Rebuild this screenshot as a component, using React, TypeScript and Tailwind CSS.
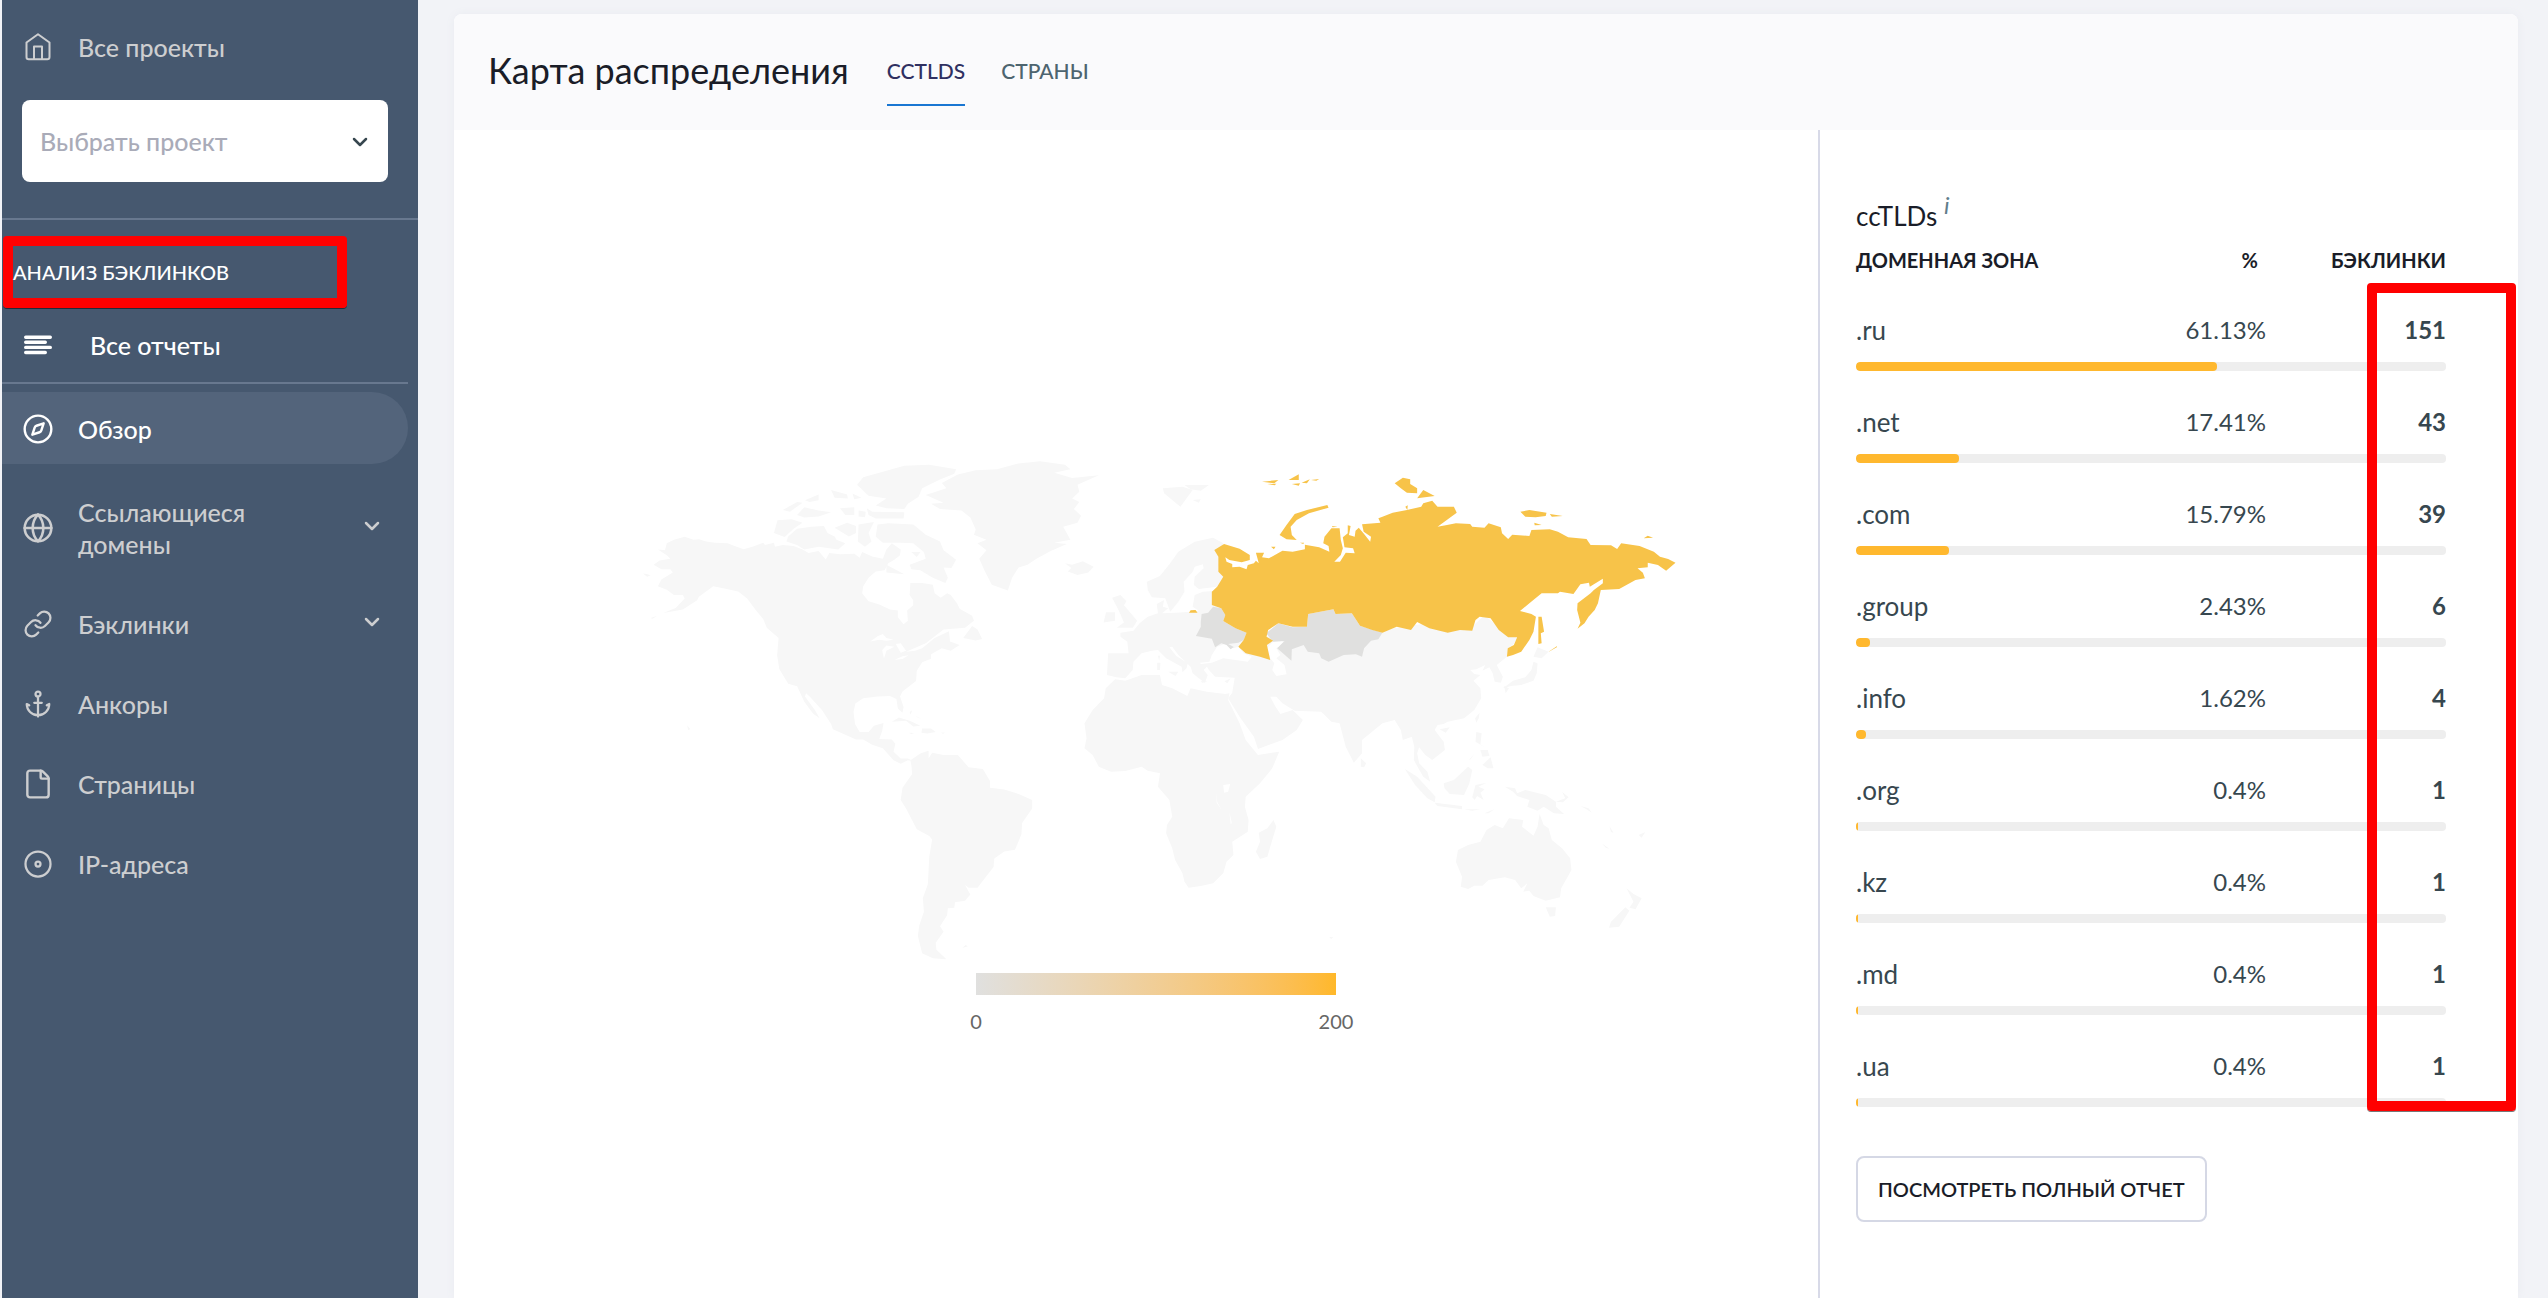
import type { ReactNode } from "react";
import { Anchor, ChevronDown, Compass, Disc, File, Globe, Link as LinkIcon } from "lucide-react";

const ZONES = [
  { zone: ".ru", percent: 61.13, backlinks: 151 },
  { zone: ".net", percent: 17.41, backlinks: 43 },
  { zone: ".com", percent: 15.79, backlinks: 39 },
  { zone: ".group", percent: 2.43, backlinks: 6 },
  { zone: ".info", percent: 1.62, backlinks: 4 },
  { zone: ".org", percent: 0.4, backlinks: 1 },
  { zone: ".kz", percent: 0.4, backlinks: 1 },
  { zone: ".md", percent: 0.4, backlinks: 1 },
  { zone: ".ua", percent: 0.4, backlinks: 1 },
];

function HomeIcon() {
  return (
    <svg viewBox="0 0 26 28" className="h-7 w-[26px]" fill="none" stroke="currentColor" strokeWidth="2" strokeLinejoin="round">
      <path d="M1.5 9.5 13 1.3 24.5 9.5V24a2.2 2.2 0 0 1-2.2 2.2H3.7A2.2 2.2 0 0 1 1.5 24Z" />
      <path d="M9 26V13.5h8V26" />
    </svg>
  );
}

function ReportsIcon() {
  return (
    <svg viewBox="0 0 28 20" className="h-5 w-7" stroke="currentColor" strokeWidth="3.4" strokeLinecap="round">
      <path d="M1.7 2.2h24.6M1.7 7.3h19.6M1.7 12.4h24.6M1.7 17.5h19.6" />
    </svg>
  );
}

function NavItem({ icon, label, expandable }: { icon: ReactNode; label: string; expandable?: boolean }) {
  return (
    <a href="#" className="flex min-h-20 items-center py-6 pr-[34px] text-[#cdced0]">
      <span className="flex w-[72px] shrink-0 justify-center">{icon}</span>
      <span className="ml-1 w-[200px] leading-8">{label}</span>
      {expandable && <ChevronDown className="-mt-1 ml-auto h-6 w-6" strokeWidth={2.5} />}
    </a>
  );
}

function Sidebar() {
  return (
    <aside className="ml-0.5 w-[416px] shrink-0 bg-[#46586f] text-[25px] leading-8 font-medium">
      <a href="#" className="flex h-[100px] items-center pb-1.5 text-[#cdced0]">
        <span className="flex w-[72px] justify-center"><HomeIcon /></span>
        <span className="ml-1">Все проекты</span>
      </a>
      <div className="relative mr-[30px] ml-5">
        <select aria-label="Выбрать проект" className="h-[82px] w-full appearance-none rounded-lg bg-white px-[18px] font-medium text-[#a9abb8]">
          <option>Выбрать проект</option>
        </select>
        <ChevronDown className="pointer-events-none absolute top-[30px] right-4 h-6 w-6 text-[#37474f]" strokeWidth={2.5} />
      </div>
      <hr className="mt-9 border-t-2 border-[#68788f]" />
      <h2 className="mt-4 ml-px flex h-[72px] w-[344px] items-center rounded border-[10px] border-[#ff0000] text-xl font-medium text-white shadow-[0_1px_0_#222c3a]">
        АНАЛИЗ БЭКЛИНКОВ
      </h2>
      <a href="#" className="mr-2.5 flex h-[76px] items-center border-b-2 border-[#68788f] text-white">
        <span className="flex w-[72px] justify-center"><ReportsIcon /></span>
        <span className="ml-4">Все отчеты</span>
      </a>
      <nav>
        <a href="#" className="mt-2 mr-2.5 mb-2 flex h-[72px] items-center rounded-r-full bg-[#53647b] pt-0.5 text-white">
          <span className="flex w-[72px] justify-center"><Compass className="h-8 w-8" strokeWidth={1.8} /></span>
          <span className="ml-1">Обзор</span>
        </a>
        <NavItem icon={<Globe className="h-8 w-8" strokeWidth={1.9} />} label="Ссылающиеся домены" expandable />
        <NavItem icon={<LinkIcon className="h-[30px] w-[30px]" strokeWidth={1.8} />} label="Бэклинки" expandable />
        <NavItem icon={<Anchor className="h-[30px] w-[30px]" strokeWidth={1.8} />} label="Анкоры" />
        <NavItem icon={<File className="h-8 w-8" strokeWidth={1.8} />} label="Страницы" />
        <NavItem icon={<Disc className="h-[30px] w-[30px]" strokeWidth={1.8} />} label="IP-адреса" />
      </nav>
    </aside>
  );
}

function WorldMap() {
  return (
    <svg viewBox="632 456 1048 508" className="w-[1048px] max-w-full" role="img">
      {/* Western hemisphere, Greenland, British Isles */}
      <g transform="translate(640 440) scale(.35714 .34439)" fill="#f7f7f7">
        <path d="M50 318 70 320 75 300 95 290 125 281 150 290 165 288 185 295 210 298 245 300 265 308 290 317 315 310 345 298 350 305 375 298 378 310 400 305 430 308 455 318 472 328 500 322 520 347 530 328 560 332 600 330 615 342 622 325 650 338 680 345 690 318 705 300 730 318 728 335 712 348 695 358 685 378 660 382 640 400 625 425 622 445 640 468 670 478 700 492 722 495 722 515 738 535 750 525 748 495 765 480 765 465 755 450 757 415 790 415 820 420 825 445 842 458 860 445 870 450 888 475 895 490 930 510 935 525 910 545 850 550 800 590 745 615 770 612 790 605 825 575 865 555 868 585 895 595 870 612 845 605 815 622 815 635 790 645 775 670 773 700 735 730 728 745 738 775 735 792 722 780 718 752 700 743 665 745 625 750 603 765 598 790 602 825 615 848 640 848 655 830 682 822 678 845 670 868 705 870 715 882 710 905 730 925 750 925 765 932 750 930 730 940 710 930 680 895 650 885 625 870 605 870 540 840 535 825 510 785 475 745 465 735 462 745 490 785 503 808 485 795 460 760 440 715 415 708 390 665 384 625 388 575 355 545 345 520 325 495 300 460 275 440 240 432 205 425 165 455 160 465 120 492 65 502 100 488 125 460 120 450 95 450 75 435 50 425 60 405 92 385 85 375 60 375 38 362 55 350 85 345 75 335Z" />
        <path d="M757 930 785 910 808 902 808 925 818 908 850 915 890 915 920 950 960 955 980 990 980 1010 1020 1015 1060 1028 1098 1045 1098 1070 1070 1112 1068 1145 1050 1190 1020 1195 992 1215 990 1240 960 1280 945 1300 920 1300 910 1292 925 1320 910 1338 882 1342 880 1358 862 1360 860 1380 840 1412 850 1428 828 1460 830 1480 858 1508 820 1505 790 1490 778 1440 782 1410 795 1370 792 1330 806 1290 810 1210 818 1160 810 1150 775 1130 745 1070 730 1045 735 1010 762 970 760 945Z" />
        <path d="M800 160 858 140 845 125 890 100 940 88 1000 85 1060 68 1120 62 1190 72 1205 85 1160 95 1210 110 1285 102 1225 130 1230 150 1210 170 1230 180 1215 200 1235 220 1225 240 1185 252 1205 290 1160 298 1195 302 1150 322 1110 345 1085 362 1060 370 1042 400 1030 437 985 420 965 380 950 345 970 320 945 300 970 290 935 275 940 260 925 225 900 205 840 200 815 185 850 182Z" />
        <path d="M660 280 665 245 695 242 765 245 800 275 840 295 850 320 885 348 872 372 850 370 862 400 855 415 820 400 785 378 760 375 755 362 800 345 795 325 765 300 730 298 680 298Z" />
        <path d="M608 130 625 108 670 95 740 75 810 72 885 85 880 98 840 115 790 140 780 165 750 185 740 200 690 198 660 190 690 170 640 162ZM635 198 650 208 740 210 738 228 660 228 640 218ZM415 280 440 258 480 252 515 250 525 270 545 280 550 290 575 300 555 318 500 310 460 318 440 305 410 295ZM385 233 425 230 455 240 430 258 405 282 375 270Z" />
        <path d="M545 255 580 240 605 250 605 270 585 280ZM612 245 655 238 640 270 648 295 630 310 610 295ZM400 203 440 180 455 182 420 208ZM440 218 460 195 500 205 535 210 500 222 460 225ZM462 175 500 158 500 175 475 180ZM535 145 580 158 582 170 545 168ZM560 198 600 195 600 218 575 218ZM595 155 620 168 600 172ZM612 205 632 208 630 224 612 222ZM690 362 740 390 690 385ZM760 325 785 325 775 340Z" />
        <path d="M905 575 930 540 945 550 958 578 940 582ZM705 818 725 806 755 815 785 830 765 832 745 815ZM790 838 815 838 828 848 805 852 788 850ZM843 849 855 850 848 853ZM752 850 768 851 760 854ZM902 1475 912 1466 918 1470ZM132 828 141 840 135 842ZM8 388 18 389 30 393 20 397ZM30 517 48 510 35 519ZM755 790 762 785 758 798ZM770 800 790 811 778 806Z" />
        <path d="M1190 358 1210 362 1240 352 1270 368 1255 385 1225 392 1198 382 1208 372ZM1298 530 1305 500 1330 500 1330 525ZM1322 458 1345 450 1362 468 1355 480 1370 498 1392 525 1380 545 1335 545 1355 530 1345 505 1338 490Z" />
        <path fill="#fff" d="M645 585 665 570 680 563 690 575 710 580 690 583 670 580ZM683 635 678 610 690 597 712 600 690 612ZM716 592 730 590 745 612 730 618ZM713 638 735 628 752 625 735 636Z" />
      </g>
      <g transform="translate(1060 440) scale(.40816 .33333)" fill="#f7f7f7">
        {/* Europe and Asia */}
        <path d="M213 425 245 408 270 370 290 335 330 305 375 293 400 310 390 350 402 410 385 440 340 447 328 435 330 410 352 385 350 373 330 380 325 395 303 425 305 455 290 485 270 515 258 475 225 472 215 450Z" />
        <path d="M148 578 180 572 195 550 215 530 240 520 237 492 255 480 252 500 265 505 250 520 285 518 320 515 340 512 325 500 330 465 350 455 385 452 420 500 500 590 790 570 900 550 1010 560 1040 525 1095 585 1120 592 1112 612 1098 625 1095 650 1070 675 1085 710 1080 728 1065 725 1060 700 1052 682 1035 692 1042 675 1020 688 1005 690 1015 702 1030 705 1013 722 1030 745 1032 775 1015 810 990 835 950 845 940 852 925 855 918 870 940 905 943 930 912 960 895 945 880 922 875 940 880 970 900 995 907 1025 890 1010 878 985 867 960 868 920 862 890 840 900 835 870 820 840 790 850 740 900 740 940 720 968 700 920 685 850 665 845 640 815 575 812 545 790 530 770 515 770 528 800 540 822 570 810 595 840 580 870 545 900 485 927 475 890 440 830 412 775 422 758 428 713 380 710 365 690 360 680 352 690 362 705 355 728 340 715 325 700 320 680 290 645 275 620 268 622 285 648 313 670 310 685 300 697 298 680 260 655 240 630 225 632 200 640 180 665 178 690 160 715 138 712 115 705 118 640 168 640 165 605 148 590Z" />
        <path fill="#fff" d="M372 645 385 620 408 610 425 625 437 620 450 640 470 650 460 665 430 660 400 655 372 668 345 672 343 668 366 665ZM507 625 522 605 545 603 550 612 530 625 540 645 530 655 550 675 555 703 530 708 520 690 525 670 515 655Z" />
        <path d="M252 145 300 140 325 150 295 200 280 185 255 160ZM305 135 365 135 345 152 320 148ZM325 180 345 178 340 188ZM265 695 290 695 283 708ZM238 668 246 668 245 690 238 690ZM240 647 245 647 243 662ZM345 723 362 725 348 728ZM403 724 418 715 410 730ZM737 955 750 970 745 982 737 980ZM1028 818 1026 835 1020 848 1017 835ZM930 868 955 862 945 878Z" />
        <path d="M1170 622 1197 635 1180 655 1160 650ZM1160 665 1170 670 1168 700 1160 722 1130 735 1105 738 1085 745 1110 722 1140 712 1155 690ZM1088 738 1100 745 1092 760Z" />
        {/* Africa */}
        <path d="M135 718 160 722 200 705 245 705 250 735 275 745 312 768 320 745 360 755 405 762 415 760 412 780 440 850 455 900 485 945 537 935 520 985 490 1030 455 1070 453 1100 462 1140 460 1175 422 1205 425 1245 408 1265 400 1300 375 1330 345 1338 315 1343 305 1325 300 1300 282 1260 275 1225 260 1180 262 1155 275 1130 268 1080 240 1040 245 1000 215 992 200 980 160 993 125 995 95 980 80 945 60 925 65 895 60 850 80 810 108 775 112 745Z" />
        <path d="M487 1178 508 1165 523 1140 530 1160 520 1200 508 1250 490 1257 480 1235 490 1205Z" />
        <path fill="#fff" d="M400 1035 417 1032 412 1055 402 1058ZM382 1055 385 1085 396 1110 384 1088ZM415 1115 421 1150 418 1152Z" />
        {/* Oceania */}
        <path d="M1020 876 1033 880 1030 915 1045 925 1018 905ZM1035 975 1055 952 1062 985 1048 985ZM1002 960 1016 940 1006 958ZM1030 930 1048 930 1052 948 1035 950ZM845 987 875 1010 905 1050 920 1070 918 1087 900 1075 870 1035ZM918 1088 985 1098 985 1108 925 1098ZM940 1030 965 1020 1000 980 1010 990 1003 1030 990 1065 955 1062 942 1045ZM1018 1035 1045 1028 1025 1040 1040 1048 1030 1058 1038 1080 1022 1068 1016 1080 1010 1072ZM990 1108 1030 1108 1010 1112ZM1040 1120 1065 1107 1050 1120Z" />
        <path d="M1090 1040 1115 1045 1120 1060 1140 1050 1190 1065 1215 1085 1215 1100 1235 1122 1210 1120 1185 1100 1170 1112 1145 1100 1150 1080 1120 1068 1110 1055ZM1215 1085 1238 1075 1230 1055 1246 1072 1232 1087Z" />
        <path d="M1175 1122 1185 1155 1197 1165 1205 1200 1230 1225 1250 1255 1253 1290 1228 1345 1225 1372 1190 1382 1160 1368 1150 1352 1135 1355 1145 1330 1130 1345 1115 1320 1090 1312 1050 1320 1035 1337 1015 1337 1000 1347 982 1340 985 1310 970 1265 975 1230 1000 1215 1030 1205 1045 1170 1065 1155 1085 1165 1100 1135 1135 1140 1132 1160 1160 1187 1170 1160ZM1190 1402 1215 1402 1213 1428 1200 1430ZM1388 1345 1405 1362 1425 1375 1410 1408 1395 1403 1405 1385ZM1385 1402 1395 1412 1370 1460 1345 1463 1350 1445ZM1275 1098 1295 1105 1303 1118 1290 1108ZM1346 1158 1356 1178 1350 1176ZM1327 1210 1346 1226 1338 1224ZM1418 1185 1434 1176 1425 1193ZM660 1491 670 1492 664 1497Z" />
        {/* Belarus, Ukraine, Moldova and Kazakhstan */}
        <path fill="#e0e0df" d="M345 545 347 522 363 518 375 500 395 505 405 525 400 543 430 565 457 578 450 600 437 608 412 612 426 621 418 628 408 615 395 610 380 622 372 596 333 588 345 560ZM790 578 780 598 762 602 745 625 740 650 725 643 695 645 658 665 640 655 635 640 607 635 597 615 568 628 567 662 532 625 550 603 522 605 505 580 535 550 570 562 605 560 608 522 670 508 675 522 715 520 735 557Z" />
        {/* Russia */}
        <g fill="#f7c349">
          <path d="M378 330 402 312 440 326 465 345 465 360 445 367 415 360 405 352 408 365 422 372 422 382 440 380 457 388 460 375 475 370 480 362 487 370 480 338 500 338 495 352 512 355 545 332 570 335 600 328 600 314 635 322 660 335 658 318 645 310 648 290 665 265 685 265 688 300 693 325 688 345 672 365 686 365 700 338 722 340 718 325 697 322 693 292 705 280 705 256 712 258 708 285 722 290 724 272 732 263 745 282 760 305 762 290 744 275 740 253 785 248 780 235 790 230 815 218 850 210 885 200 890 190 912 182 925 200 965 200 972 218 925 260 945 256 970 250 1005 252 1010 260 1040 263 1050 250 1080 262 1083 280 1098 297 1108 284 1150 288 1155 270 1200 268 1220 275 1245 292 1290 297 1300 315 1350 316 1365 327 1375 310 1420 318 1455 335 1470 350 1490 357 1508 368 1485 392 1465 375 1440 368 1440 382 1415 385 1428 398 1433 415 1410 420 1370 447 1325 450 1318 490 1310 510 1295 530 1285 550 1268 566 1275 548 1267 510 1268 490 1300 460 1308 450 1330 430 1330 416 1298 440 1296 428 1275 433 1258 462 1225 455 1220 460 1180 460 1150 490 1127 513 1155 522 1166 530 1160 575 1150 600 1130 635 1110 645 1095 650 1097 625 1112 615 1120 592 1098 592 1075 570 1055 535 1028 530 1018 540 1010 572 980 570 950 578 905 565 875 546 860 570 825 560 790 578 765 570 735 557 715 520 675 522 670 508 608 522 605 560 570 560 535 550 510 570 506 590 522 602 507 615 515 660 490 650 455 640 437 620 450 600 457 578 430 565 400 543 405 525 395 505 372 495 372 455 385 440 400 410 388 395 388 350Z" />
          <path d="M538 285 555 255 575 222 605 210 655 195 658 203 610 220 580 240 565 260 568 285 580 300 555 298ZM820 130 840 113 858 118 858 132 875 145 875 160 850 158 835 145ZM875 175 890 150 918 168ZM495 125 535 120 525 130ZM560 120 585 103 585 120ZM592 128 612 118 605 130ZM615 120 635 117 628 122ZM568 132 588 130 585 137ZM508 132 530 131 526 136ZM1128 215 1150 210 1192 218 1190 228 1165 232 1140 230ZM1200 222 1232 228 1205 230ZM1162 248 1180 255 1163 256ZM1430 295 1440 287 1453 293ZM1172 530 1180 530 1186 575 1178 580 1180 610 1172 612ZM1197 635 1217 619 1218 621 1200 634ZM316 518 320 511 332 510 337 518ZM517 320 528 320 524 328ZM588 308 598 308 596 312ZM666 258 680 260 668 262ZM846 200 852 196 851 210Z" />
        </g>
      </g>
    </svg>
  );
}

function DomainZones() {
  return (
    <section className="w-[700px] shrink-0 border-l-2 border-[#d8dae8] pt-[70px] pr-[72px] pb-[56px] pl-9 text-2xl leading-8 text-[#37474f]">
      <h3 className="h-[46px] text-[26px] leading-8 text-[#1a1d28]">
        ccTLDs <sup className="text-2xl leading-none text-[#607d8b] italic">i</sup>
      </h3>
      <div className="relative">
        <table className="w-full">
          <thead>
            <tr className="h-[68px] align-top text-xl leading-7 text-[#1a1d28]">
              <th className="text-left font-bold">ДОМЕННАЯ ЗОНА</th>
              <th className="w-[150px] pr-2 text-right font-bold">%</th>
              <th className="w-[180px] text-right font-bold">БЭКЛИНКИ</th>
            </tr>
          </thead>
          {ZONES.map((row) => (
            <tbody key={row.zone}>
              <tr className="h-[48px] align-top">
                <td className="text-[26px] leading-8">{row.zone}</td>
                <td className="text-right">{row.percent}%</td>
                <td className="text-right font-bold">{row.backlinks}</td>
              </tr>
              <tr className="h-[44px] align-top">
                <td colSpan={3}>
                  <div className="h-[9px] overflow-hidden rounded bg-[#eee]">
                    <div className="h-full rounded bg-[#ffb82e]" style={{ width: `${row.percent}%` }} />
                  </div>
                </td>
              </tr>
            </tbody>
          ))}
        </table>
        <div className="pointer-events-none absolute top-[37px] -right-[70px] bottom-[31px] w-[149px] rounded border-[10px] border-[#ff0000] shadow-[0_1px_0_#777]" />
      </div>
      <button className="mt-3.5 h-[66px] rounded-lg border-2 border-[#d5d8e5] px-5 text-xl font-semibold text-[#1a1d28]">
        ПОСМОТРЕТЬ ПОЛНЫЙ ОТЧЕТ
      </button>
    </section>
  );
}

export default function App() {
  return (
    <div className="flex min-h-screen bg-[#f2f3f7] font-['Lato',sans-serif]">
      <Sidebar />
      <main className="flex min-w-0 flex-1 flex-col pt-3.5 pr-[30px] pl-9">
        <div className="flex flex-1 flex-col rounded-t-lg bg-white shadow-[0_0_8px_#e9ebf0]">
          <header className="flex h-[116px] items-center rounded-t-lg bg-[#fafafc] px-[34px] pb-1">
            <h1 className="text-4xl text-[#1a1d28]">Карта распределения</h1>
            <nav className="ml-[38px] flex gap-9 pt-1 text-[21px]">
              <button className="h-[68px] border-b-2 border-[#1976d2] font-medium text-[#2f3061]">CCTLDS</button>
              <button className="h-[68px] border-b-2 border-transparent font-medium text-[#4d646f]">СТРАНЫ</button>
            </nav>
          </header>
          <div className="flex flex-1">
            <section className="flex min-w-0 flex-1 flex-col items-center pt-[326px] pl-10">
              <WorldMap />
              <div className="mt-[9px] h-[22px] w-[360px] bg-linear-to-r from-[#e0e0df] to-[#ffb829]" />
              <div className="mt-3 flex w-[396px] justify-between text-xl text-[#666]">
                <span className="w-9 text-center">0</span>
                <span className="w-9 text-center">200</span>
              </div>
            </section>
            <DomainZones />
          </div>
        </div>
      </main>
    </div>
  );
}
